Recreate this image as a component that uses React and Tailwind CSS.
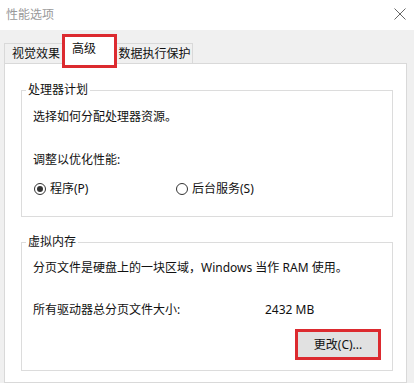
export default function App() {
  const font = { fontFamily: '"Noto Sans", "Noto Sans CJK SC", sans-serif' };

  return (
    <div className="w-[414px] h-[383px] bg-[#f0f0f0] overflow-hidden flex flex-col text-[12px] leading-[16px] text-[#111]" style={font}>
      {/* 标题栏 */}
      <div className="h-[30px] bg-white flex items-center justify-between pl-[6px] pr-[8px] shrink-0">
        <span className="text-[#999] pb-[1px]">性能选项</span>
        <svg width="12" height="12" viewBox="0 0 12 12" className="mt-[-2px]">
          <path d="M0.5 0.5L11.5 11.5M11.5 0.5L0.5 11.5" stroke="#666" strokeWidth="1" fill="none" />
        </svg>
      </div>

      {/* 选项卡 */}
      <div className="h-[33px] flex items-end pl-[4px] shrink-0">
        <div className="w-[58px] h-[20px] border-t border-l border-[#d9d9d9] bg-[#f0f0f0] pl-[7px] flex items-center">
          视觉效果
        </div>
        <div className="relative z-10 w-[55px] h-[34px] mb-[-5px] border-[3px] border-[#dc2a2f] bg-white pl-[7px] pt-[4px]">
          高级
        </div>
        <div className="w-[76px] h-[20px] border-t border-r border-[#d9d9d9] bg-[#f0f0f0] flex items-center justify-center">
          数据执行保护
        </div>
      </div>

      {/* 面板 */}
      <div className="ml-[4px] w-[403px] flex-1 bg-white border border-[#d9d9d9]">
        <fieldset className="mt-[18px] ml-[16px] w-[372px] border border-[#dcdcdc]">
          <legend className="ml-[4px] px-[2px]">处理器计划</legend>
          <div className="pt-[11px] pb-[19px] pl-[11px]">
            <div>选择如何分配处理器资源。</div>
            <div className="mt-[27px]">调整以优化性能:</div>
            <div className="mt-[13px] flex items-center">
              <div className="w-[12px] h-[12px] ml-[1px] rounded-full border border-[#333] flex items-center justify-center">
                <div className="w-[6px] h-[6px] rounded-full bg-[#333]" />
              </div>
              <span className="ml-[4px] w-[126px]">程序(P)</span>
              <div className="w-[12px] h-[12px] rounded-full border border-[#333]" />
              <span className="ml-[4px]">后台服务(S)</span>
            </div>
          </div>
        </fieldset>

        <fieldset className="mt-[17px] ml-[16px] w-[372px] border border-[#dcdcdc]">
          <legend className="ml-[4px] px-[2px]">虚拟内存</legend>
          <div className="pt-[10px] pb-[10px] pl-[11px]">
            <div>分页文件是硬盘上的一块区域，Windows 当作 RAM 使用。</div>
            <div className="mt-[26px] flex">
              <span className="w-[232px]">所有驱动器总分页文件大小:</span>
              <span>2432 MB</span>
            </div>
            <div className="mt-[11px] flex justify-end pr-[11px]">
              <button className="w-[86px] h-[31px] border-[3px] border-[#dc2a2f] bg-[#e1e1e1] flex items-center justify-center">
                更改(C)...
              </button>
            </div>
          </div>
        </fieldset>
      </div>
    </div>
  );
}
